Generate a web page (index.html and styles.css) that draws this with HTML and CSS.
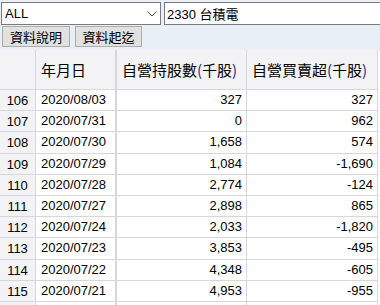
FILE: index.html
```html
<!DOCTYPE html>
<html>
<head>
<meta charset="utf-8">
<link rel="stylesheet" href="styles.css">
</head>
<body>
<div class="toolbar">
  <div class="row1">
    <div class="select"><span>ALL</span>
      <svg class="chev" width="10" height="6" viewBox="0 0 10 6"><path d="M0.5 0.5 L5 5 L9.5 0.5" fill="none" stroke="#555" stroke-width="1"/></svg>
    </div>
    <div class="input">2330 台積電</div>
  </div>
  <div class="row2">
    <button class="btn b1">資料說明</button>
    <button class="btn b2">資料起迄</button>
  </div>
</div>
<table class="grid">
  <colgroup><col class="c0"><col class="c1"><col class="c2"><col class="c3"></colgroup>
  <thead>
    <tr><th></th><th class="l">年月日</th><th class="l">自營持股數<span class="p">(</span>千股<span class="p">)</span></th><th class="l">自營買賣超<span class="p">(</span>千股<span class="p">)</span></th></tr>
  </thead>
  <tbody>
    <tr><td class="n">106</td><td class="d">2020/08/03</td><td class="v">327</td><td class="v">327</td></tr>
    <tr><td class="n">107</td><td class="d">2020/07/31</td><td class="v">0</td><td class="v">962</td></tr>
    <tr><td class="n">108</td><td class="d">2020/07/30</td><td class="v">1,658</td><td class="v">574</td></tr>
    <tr><td class="n">109</td><td class="d">2020/07/29</td><td class="v">1,084</td><td class="v">-1,690</td></tr>
    <tr><td class="n">110</td><td class="d">2020/07/28</td><td class="v">2,774</td><td class="v">-124</td></tr>
    <tr><td class="n">111</td><td class="d">2020/07/27</td><td class="v">2,898</td><td class="v">865</td></tr>
    <tr><td class="n">112</td><td class="d">2020/07/24</td><td class="v">2,033</td><td class="v">-1,820</td></tr>
    <tr><td class="n">113</td><td class="d">2020/07/23</td><td class="v">3,853</td><td class="v">-495</td></tr>
    <tr><td class="n">114</td><td class="d">2020/07/22</td><td class="v">4,348</td><td class="v">-605</td></tr>
    <tr><td class="n">115</td><td class="d">2020/07/21</td><td class="v">4,953</td><td class="v">-955</td></tr>
    <tr class="last"><td class="n"></td><td class="d"></td><td class="v"></td><td class="v"></td></tr>
  </tbody>
</table>
</body>
</html>
```
FILE: styles.css
```css
html, body { margin: 0; padding: 0; background: #fff; overflow: hidden; }
body { font-family: "Liberation Sans", Arial, "Noto Sans CJK TC", sans-serif; font-size: 13px; color: #000; width: 380px; height: 305px; }
.toolbar { background: #e9eff7; height: 50px; padding: 2px 0 0 1px; box-sizing: border-box; }
.row1 { display: flex; gap: 3px; height: 23px; }
.select { width: 160px; box-sizing: border-box; border: 1px solid #7a7a7a; background: #fff; display: flex; align-items: center; justify-content: space-between; padding: 0 3px 0 3px; }
.input { flex: 1; box-sizing: border-box; border: 1px solid #7a7a7a; border-right: none; background: #fff; display: flex; align-items: center; padding-left: 2px; font-family: "Liberation Sans", "Noto Sans CJK TC", sans-serif; }
.row2 { display: flex; gap: 5px; margin-top: 1px; padding-left: 1px; }
.btn { height: 21px; box-sizing: border-box; border: 1px solid #adadad; background: #e1e1e1; font-family: "Noto Sans CJK TC", sans-serif; font-size: 13px; color: #000; padding: 0; line-height: 19px; margin: 0; }
.b1 { width: 68px; }
.b2 { width: 67px; }
.grid { border-collapse: separate; border-spacing: 0; table-layout: fixed; width: 378px; }
.c0 { width: 36px; } .c1 { width: 81px; } .c2 { width: 130px; } .c3 { width: 131px; }
th { height: 39px; padding: 0 0 0 5px; background: #f3f3f5; font-family: "Noto Sans CJK TC", sans-serif; font-weight: normal; font-size: 15px; border-right: 1px solid #d6d6db; border-bottom: 1px solid #d6d6db; text-align: left; white-space: nowrap; overflow: hidden; }
th:first-child { padding: 0; }
th:nth-child(2) { border-right-width: 2px; }
th .p { color: #1f2a8a; }
td { height: 20.2px; padding: 0 4px; line-height: 20px; border-right: 1px solid #d6d6db; border-bottom: 1px solid #d6d6db; white-space: nowrap; overflow: hidden; }
td.n { background: #f3f3f5; text-align: center; padding: 1px 0 0 0; height: 19.2px; line-height: 19px; }
td.d { padding-left: 5px; border-right-width: 2px; }
td.v { text-align: right; }
```
